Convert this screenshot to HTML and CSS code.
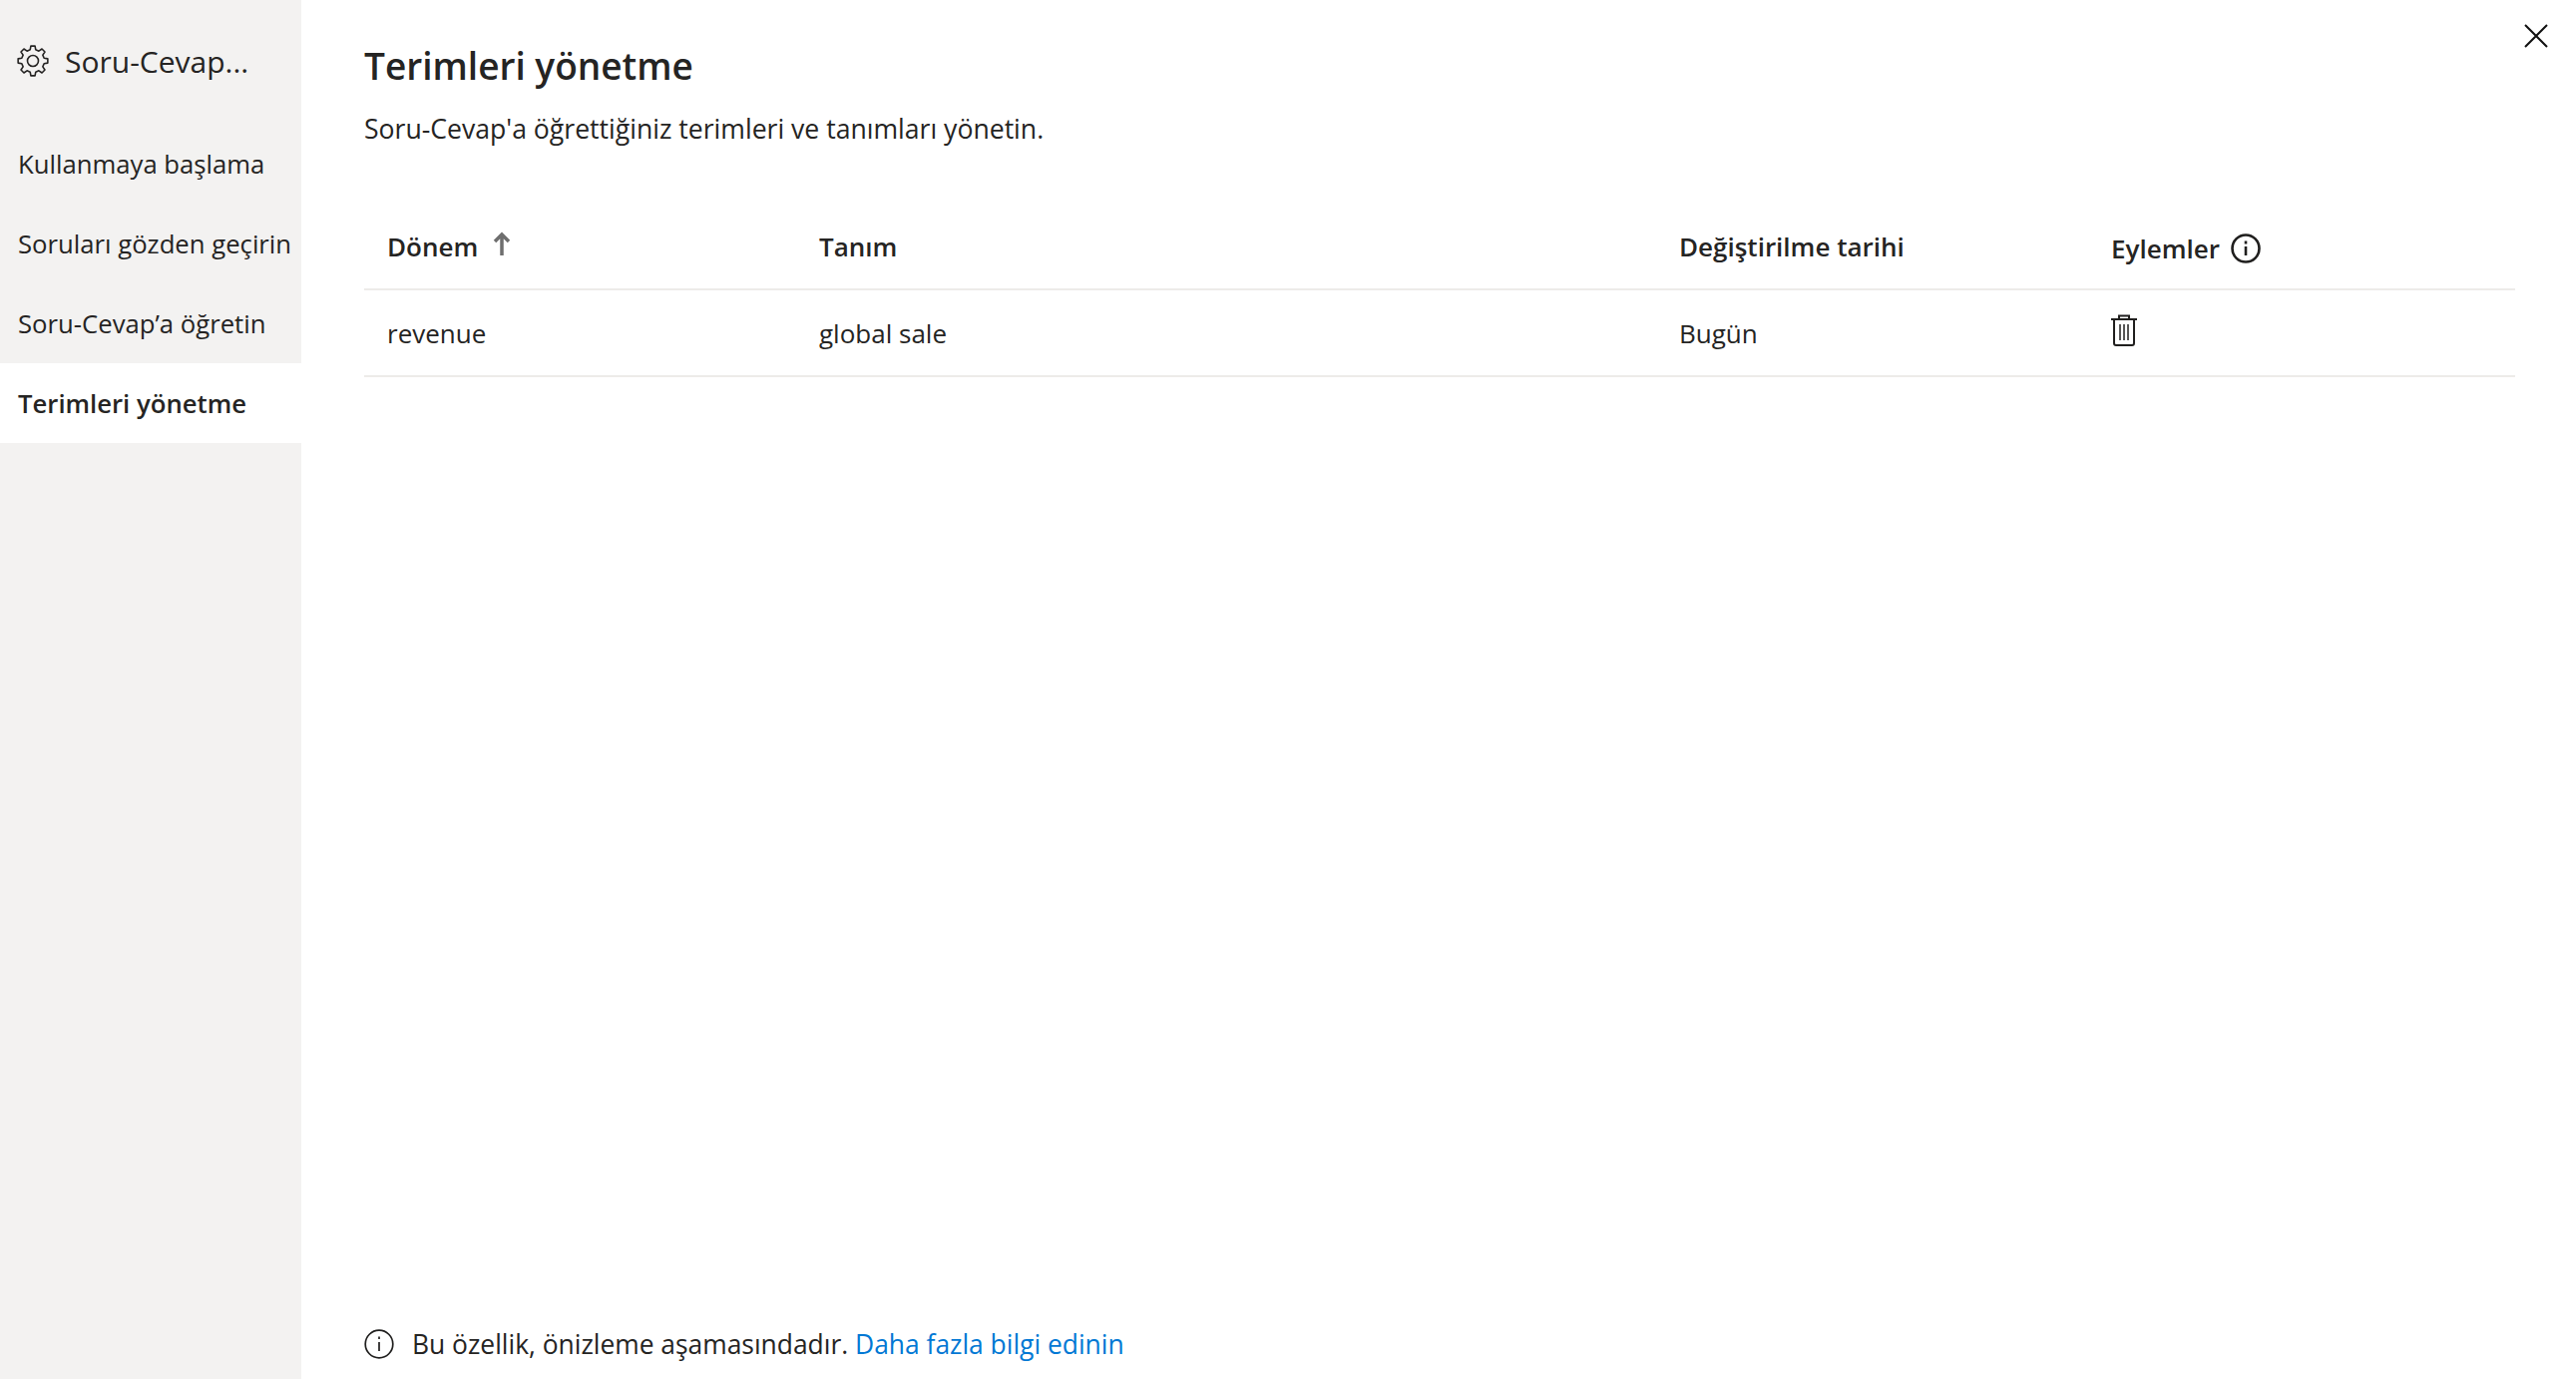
FILE: index.html
```html
<!DOCTYPE html>
<html lang="tr">
<head>
    <meta charset="UTF-8">
    <title>Terimleri yönetme</title>
    <link rel="stylesheet" href="styles.css">
</head>
<body>
    <aside class="sidebar">
        <div class="sidebar-head">
            <svg class="gear" viewBox="0 0 32 32" width="32" height="32" fill="none" stroke="#252423" stroke-width="1.600" stroke-linejoin="round">
                <polygon points="27.16,13.22 30.85,13.91 30.85,18.09 27.16,18.78 25.86,21.92 27.98,25.03 25.03,27.98 21.92,25.86 18.78,27.16 18.09,30.85 13.91,30.85 13.22,27.16 10.08,25.86 6.97,27.98 4.02,25.03 6.14,21.92 4.84,18.78 1.15,18.09 1.15,13.91 4.84,13.22 6.14,10.08 4.02,6.97 6.97,4.02 10.08,6.14 13.22,4.84 13.91,1.15 18.09,1.15 18.78,4.84 21.92,6.14 25.03,4.02 27.98,6.97 25.86,10.08"/>
                <circle cx="16" cy="16" r="5.500"/>
            </svg>
            <span class="sidebar-title">Soru-Cevap...</span>
        </div>
        <nav class="nav">
            <a class="nav-item">Kullanmaya başlama</a>
            <a class="nav-item">Soruları gözden geçirin</a>
            <a class="nav-item">Soru-Cevap’a öğretin</a>
            <a class="nav-item active">Terimleri yönetme</a>
        </nav>
    </aside>

    <main class="content">
        <button class="close" aria-label="Kapat">
            <svg viewBox="0 0 24 24" width="24" height="24" stroke="#111" stroke-width="2" fill="none"><path d="M1 1l22 22M23 1L1 23"/></svg>
        </button>

        <h1 class="title">Terimleri yönetme</h1>
        <p class="subtitle">Soru-Cevap'a öğrettiğiniz terimleri ve tanımları yönetin.</p>

        <div class="table">
            <div class="row head">
                <div class="cell">Dönem
                    <svg class="sort" viewBox="0 0 20 24" width="20" height="24" fill="none" stroke="#6e6e6e" stroke-width="3.500"><path d="M10 24V3M3 10l7-7 7 7"/></svg>
                </div>
                <div class="cell">Tanım</div>
                <div class="cell">Değiştirilme tarihi</div>
                <div class="cell actions">Eylemler
                    <svg class="info" viewBox="0 0 30 30" width="30" height="30" fill="none" stroke="#201f1e" stroke-width="2.600"><circle cx="15" cy="15" r="13.500"/><path d="M15 13v9M15 7.500v3"/></svg>
                </div>
            </div>
            <div class="row">
                <div class="cell">revenue</div>
                <div class="cell">global sale</div>
                <div class="cell">Bugün</div>
                <div class="cell">
                    <svg class="trash" viewBox="0 0 26 32" width="26" height="32" fill="none" stroke="#201f1e" stroke-width="2"><path d="M0 5h26M8 5V1.500h10V5M3 5v24a2 2 0 0 0 2 2h16a2 2 0 0 0 2-2V5"/><path d="M9 10v16M13 10v16M17 10v16" stroke-width="1.500"/></svg>
                </div>
            </div>
        </div>

        <footer class="note">
            <svg viewBox="0 0 30 30" width="30" height="30" fill="none" stroke="#201f1e" stroke-width="1.700"><circle cx="15" cy="15" r="13.800"/><path d="M15 13v9M15 7.500v2.500"/></svg>
            <span>Bu özellik, önizleme aşamasındadır. <a class="link">Daha fazla bilgi edinin</a></span>
        </footer>
    </main>
</body>
</html>
```

FILE: styles.css
```css
/* Page */
body {
    margin: 0;
    height: 1382px;
    display: flex;
    font-family: "Open Sans", "Noto Sans", sans-serif;
    color: #252423;
    background-color: #fff;
}

/* Sidebar */
.sidebar {
    width: 302px;
    flex-shrink: 0;
    background-color: #f3f2f1;
}

.sidebar-head {
    display: flex;
    align-items: center;
    gap: 16px;
    height: 62px;
    padding: 30px 0 32px 17px;
}

.gear {
    flex-shrink: 0;
}

.sidebar-title {
    font-size: 30px;
    white-space: nowrap;
}

.nav {
    display: flex;
    flex-direction: column;
}

.nav-item {
    height: 80px;
    line-height: 82px;
    padding-left: 18px;
    font-size: 25.700px;
    white-space: nowrap;
}

.nav-item.active {
    background-color: #fff;
    font-weight: 600;
}

/* Main panel */
.content {
    flex: 1;
    position: relative;
    display: flex;
    flex-direction: column;
    padding: 0 61px 0 63px;
}

.close {
    position: absolute;
    top: 24px;
    right: 28px;
    padding: 0;
    border: none;
    background: none;
    line-height: 0;
}

.title {
    margin: 40px 0 0;
    font-size: 37px;
    line-height: 52px;
    font-weight: 600;
}

.subtitle {
    margin: 19px 0 0;
    font-size: 26.600px;
    line-height: 36px;
}

/* Table */
.table {
    margin-top: 57px;
}

.row {
    display: grid;
    grid-template-columns: 433px 862px 433px 1fr;
    height: 85px;
    border-bottom: 2px solid #edebe9;
    font-size: 26px;
}

.row.head {
    font-weight: 600;
}

.cell {
    display: flex;
    align-items: center;
    padding-left: 23px;
}

.sort {
    margin: 0 0 6px 14px;
}

.actions {
    padding-top: 4px;
}

.info {
    margin-left: 11px;
}

.trash {
    margin-bottom: 6px;
}

/* Footer note */
.note {
    margin-top: auto;
    height: 70px;
    display: flex;
    align-items: center;
    gap: 18px;
    font-size: 26.400px;
}

.link {
    color: #0078d4;
}
```
